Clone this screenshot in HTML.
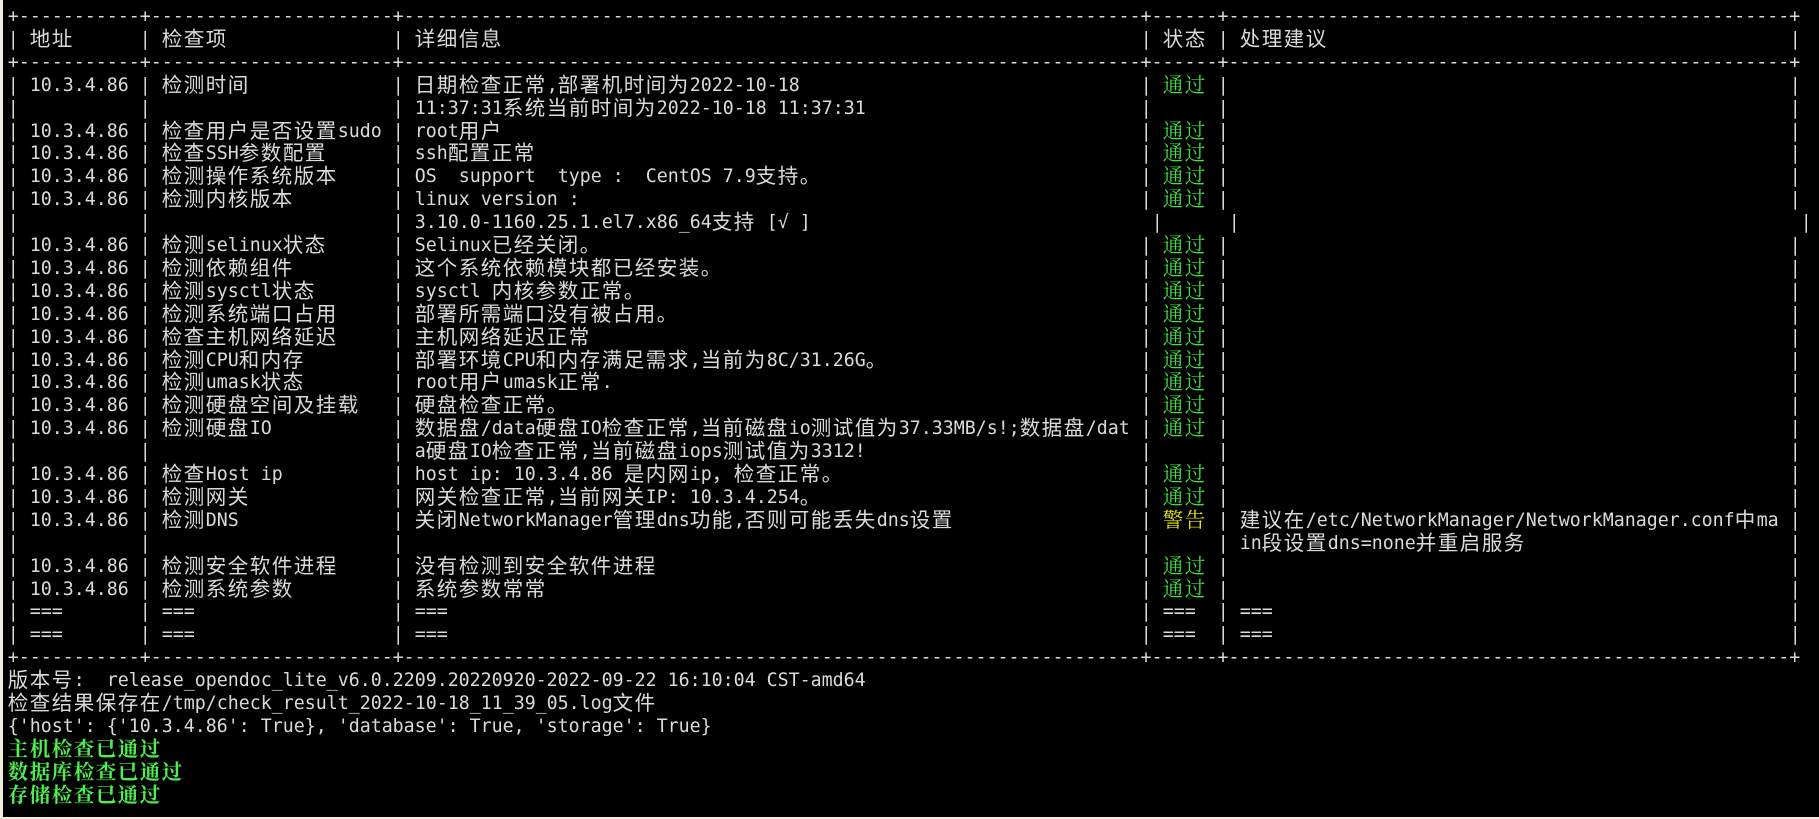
<!DOCTYPE html>
<html><head><meta charset="utf-8"><style>
html,body{margin:0;padding:0;}
body{width:1819px;height:819px;background:#f1ecdc;position:relative;overflow:hidden;}
#t{position:absolute;left:3px;top:0;width:1816px;height:817px;background:#000;}
.r{position:absolute;left:-3px;height:22.9px;width:1819px;}
.r span,.r i{position:absolute;top:0;white-space:pre;font-family:"DejaVu Sans Mono","Liberation Mono",monospace;font-size:18.28px;line-height:22.9px;color:#dadada;font-style:normal;}
u{text-decoration:none;font-family:"Noto Sans CJK SC",sans-serif;font-size:20.5px;letter-spacing:1.5px;line-height:0;vertical-align:baseline;position:relative;top:1px;}
.g{color:#3fe03f!important;}
.g u,.y u,.gb u{font-family:"Noto Serif CJK SC",serif;}
.y{color:#e6e600!important;}
.gb{color:#4cf04c!important;font-weight:bold;}
.p0{left:7.8px}.p1{left:139.8px}.p2{left:392.8px}.p3{left:1140.8px}.p4{left:1217.8px}.p5{left:1789.8px}
.q3{left:1151.8px}.q4{left:1228.8px}.q5{left:1800.8px}
.a{left:29.8px}.b{left:161.8px}.c{left:414.8px}.d{left:1162.8px}.e{left:1239.8px}.f{left:7.8px}
</style></head><body><div id="t">
<div class="r" style="top:6px"><span class="f">+-----------+----------------------+-------------------------------------------------------------------+------+---------------------------------------------------+</span></div>
<div class="r" style="top:28.9px"><i class="p0">|</i><i class="p1">|</i><i class="p2">|</i><i class="p3">|</i><i class="p4">|</i><i class="p5">|</i><span class="a"><u>地址</u></span><span class="b"><u>检查项</u></span><span class="c"><u>详细信息</u></span><span class="d"><u>状态</u></span><span class="e"><u>处理建议</u></span></div>
<div class="r" style="top:51.8px"><span class="f">+-----------+----------------------+-------------------------------------------------------------------+------+---------------------------------------------------+</span></div>
<div class="r" style="top:74.7px"><i class="p0">|</i><i class="p1">|</i><i class="p2">|</i><i class="p3">|</i><i class="p4">|</i><i class="p5">|</i><span class="a">10.3.4.86</span><span class="b"><u>检测时间</u></span><span class="c"><u>日期检查正常</u>,<u>部署机时间为</u>2022-10-18</span><span class="d g"><u>通过</u></span></div>
<div class="r" style="top:97.6px"><i class="p0">|</i><i class="p1">|</i><i class="p2">|</i><i class="p3">|</i><i class="p4">|</i><i class="p5">|</i><span class="c">11:37:31<u>系统当前时间为</u>2022-10-18 11:37:31</span></div>
<div class="r" style="top:120.5px"><i class="p0">|</i><i class="p1">|</i><i class="p2">|</i><i class="p3">|</i><i class="p4">|</i><i class="p5">|</i><span class="a">10.3.4.86</span><span class="b"><u>检查用户是否设置</u>sudo</span><span class="c">root<u>用户</u></span><span class="d g"><u>通过</u></span></div>
<div class="r" style="top:143.4px"><i class="p0">|</i><i class="p1">|</i><i class="p2">|</i><i class="p3">|</i><i class="p4">|</i><i class="p5">|</i><span class="a">10.3.4.86</span><span class="b"><u>检查</u>SSH<u>参数配置</u></span><span class="c">ssh<u>配置正常</u></span><span class="d g"><u>通过</u></span></div>
<div class="r" style="top:166.3px"><i class="p0">|</i><i class="p1">|</i><i class="p2">|</i><i class="p3">|</i><i class="p4">|</i><i class="p5">|</i><span class="a">10.3.4.86</span><span class="b"><u>检测操作系统版本</u></span><span class="c">OS  support  type :  CentOS 7.9<u>支持。</u></span><span class="d g"><u>通过</u></span></div>
<div class="r" style="top:189.2px"><i class="p0">|</i><i class="p1">|</i><i class="p2">|</i><i class="p3">|</i><i class="p4">|</i><i class="p5">|</i><span class="a">10.3.4.86</span><span class="b"><u>检测内核版本</u></span><span class="c">linux version :</span><span class="d g"><u>通过</u></span></div>
<div class="r" style="top:212.1px"><i class="p0">|</i><i class="p1">|</i><i class="p2">|</i><i class="q3">|</i><i class="q4">|</i><i class="q5">|</i><span class="c">3.10.0-1160.25.1.el7.x86_64<u>支持</u> [√ ]</span></div>
<div class="r" style="top:235px"><i class="p0">|</i><i class="p1">|</i><i class="p2">|</i><i class="p3">|</i><i class="p4">|</i><i class="p5">|</i><span class="a">10.3.4.86</span><span class="b"><u>检测</u>selinux<u>状态</u></span><span class="c">Selinux<u>已经关闭。</u></span><span class="d g"><u>通过</u></span></div>
<div class="r" style="top:257.9px"><i class="p0">|</i><i class="p1">|</i><i class="p2">|</i><i class="p3">|</i><i class="p4">|</i><i class="p5">|</i><span class="a">10.3.4.86</span><span class="b"><u>检测依赖组件</u></span><span class="c"><u>这个系统依赖模块都已经安装。</u></span><span class="d g"><u>通过</u></span></div>
<div class="r" style="top:280.8px"><i class="p0">|</i><i class="p1">|</i><i class="p2">|</i><i class="p3">|</i><i class="p4">|</i><i class="p5">|</i><span class="a">10.3.4.86</span><span class="b"><u>检测</u>sysctl<u>状态</u></span><span class="c">sysctl <u>内核参数正常。</u></span><span class="d g"><u>通过</u></span></div>
<div class="r" style="top:303.7px"><i class="p0">|</i><i class="p1">|</i><i class="p2">|</i><i class="p3">|</i><i class="p4">|</i><i class="p5">|</i><span class="a">10.3.4.86</span><span class="b"><u>检测系统端口占用</u></span><span class="c"><u>部署所需端口没有被占用。</u></span><span class="d g"><u>通过</u></span></div>
<div class="r" style="top:326.6px"><i class="p0">|</i><i class="p1">|</i><i class="p2">|</i><i class="p3">|</i><i class="p4">|</i><i class="p5">|</i><span class="a">10.3.4.86</span><span class="b"><u>检查主机网络延迟</u></span><span class="c"><u>主机网络延迟正常</u></span><span class="d g"><u>通过</u></span></div>
<div class="r" style="top:349.5px"><i class="p0">|</i><i class="p1">|</i><i class="p2">|</i><i class="p3">|</i><i class="p4">|</i><i class="p5">|</i><span class="a">10.3.4.86</span><span class="b"><u>检测</u>CPU<u>和内存</u></span><span class="c"><u>部署环境</u>CPU<u>和内存满足需求</u>,<u>当前为</u>8C/31.26G<u>。</u></span><span class="d g"><u>通过</u></span></div>
<div class="r" style="top:372.4px"><i class="p0">|</i><i class="p1">|</i><i class="p2">|</i><i class="p3">|</i><i class="p4">|</i><i class="p5">|</i><span class="a">10.3.4.86</span><span class="b"><u>检测</u>umask<u>状态</u></span><span class="c">root<u>用户</u>umask<u>正常</u>.</span><span class="d g"><u>通过</u></span></div>
<div class="r" style="top:395.3px"><i class="p0">|</i><i class="p1">|</i><i class="p2">|</i><i class="p3">|</i><i class="p4">|</i><i class="p5">|</i><span class="a">10.3.4.86</span><span class="b"><u>检测硬盘空间及挂载</u></span><span class="c"><u>硬盘检查正常。</u></span><span class="d g"><u>通过</u></span></div>
<div class="r" style="top:418.2px"><i class="p0">|</i><i class="p1">|</i><i class="p2">|</i><i class="p3">|</i><i class="p4">|</i><i class="p5">|</i><span class="a">10.3.4.86</span><span class="b"><u>检测硬盘</u>IO</span><span class="c"><u>数据盘</u>/data<u>硬盘</u>IO<u>检查正常</u>,<u>当前磁盘</u>io<u>测试值为</u>37.33MB/s!;<u>数据盘</u>/dat</span><span class="d g"><u>通过</u></span></div>
<div class="r" style="top:441.1px"><i class="p0">|</i><i class="p1">|</i><i class="p2">|</i><i class="p3">|</i><i class="p4">|</i><i class="p5">|</i><span class="c">a<u>硬盘</u>IO<u>检查正常</u>,<u>当前磁盘</u>iops<u>测试值为</u>3312!</span></div>
<div class="r" style="top:464px"><i class="p0">|</i><i class="p1">|</i><i class="p2">|</i><i class="p3">|</i><i class="p4">|</i><i class="p5">|</i><span class="a">10.3.4.86</span><span class="b"><u>检查</u>Host ip</span><span class="c">host ip: 10.3.4.86 <u>是内网</u>ip<u>，检查正常。</u></span><span class="d g"><u>通过</u></span></div>
<div class="r" style="top:486.9px"><i class="p0">|</i><i class="p1">|</i><i class="p2">|</i><i class="p3">|</i><i class="p4">|</i><i class="p5">|</i><span class="a">10.3.4.86</span><span class="b"><u>检测网关</u></span><span class="c"><u>网关检查正常</u>,<u>当前网关</u>IP: 10.3.4.254<u>。</u></span><span class="d g"><u>通过</u></span></div>
<div class="r" style="top:509.8px"><i class="p0">|</i><i class="p1">|</i><i class="p2">|</i><i class="p3">|</i><i class="p4">|</i><i class="p5">|</i><span class="a">10.3.4.86</span><span class="b"><u>检测</u>DNS</span><span class="c"><u>关闭</u>NetworkManager<u>管理</u>dns<u>功能</u>,<u>否则可能丢失</u>dns<u>设置</u></span><span class="d y"><u>警告</u></span><span class="e"><u>建议在</u>/etc/NetworkManager/NetworkManager.conf<u>中</u>ma</span></div>
<div class="r" style="top:532.7px"><i class="p0">|</i><i class="p1">|</i><i class="p2">|</i><i class="p3">|</i><i class="p4">|</i><i class="p5">|</i><span class="e">in<u>段设置</u>dns=none<u>并重启服务</u></span></div>
<div class="r" style="top:555.6px"><i class="p0">|</i><i class="p1">|</i><i class="p2">|</i><i class="p3">|</i><i class="p4">|</i><i class="p5">|</i><span class="a">10.3.4.86</span><span class="b"><u>检测安全软件进程</u></span><span class="c"><u>没有检测到安全软件进程</u></span><span class="d g"><u>通过</u></span></div>
<div class="r" style="top:578.5px"><i class="p0">|</i><i class="p1">|</i><i class="p2">|</i><i class="p3">|</i><i class="p4">|</i><i class="p5">|</i><span class="a">10.3.4.86</span><span class="b"><u>检测系统参数</u></span><span class="c"><u>系统参数常常</u></span><span class="d g"><u>通过</u></span></div>
<div class="r" style="top:601.4px"><i class="p0">|</i><i class="p1">|</i><i class="p2">|</i><i class="p3">|</i><i class="p4">|</i><i class="p5">|</i><span class="a">===</span><span class="b">===</span><span class="c">===</span><span class="d">===</span><span class="e">===</span></div>
<div class="r" style="top:624.3px"><i class="p0">|</i><i class="p1">|</i><i class="p2">|</i><i class="p3">|</i><i class="p4">|</i><i class="p5">|</i><span class="a">===</span><span class="b">===</span><span class="c">===</span><span class="d">===</span><span class="e">===</span></div>
<div class="r" style="top:647.2px"><span class="f">+-----------+----------------------+-------------------------------------------------------------------+------+---------------------------------------------------+</span></div>
<div class="r" style="top:670.1px"><span class="f"><u>版本号</u>:  release_opendoc_lite_v6.0.2209.20220920-2022-09-22 16:10:04 CST-amd64</span></div>
<div class="r" style="top:693px"><span class="f"><u>检查结果保存在</u>/tmp/check_result_2022-10-18_11_39_05.log<u>文件</u></span></div>
<div class="r" style="top:715.9px"><span class="f">{'host': {'10.3.4.86': True}, 'database': True, 'storage': True}</span></div>
<div class="r" style="top:738.8px"><span class="f gb"><u>主机检查已通过</u></span></div>
<div class="r" style="top:761.7px"><span class="f gb"><u>数据库检查已通过</u></span></div>
<div class="r" style="top:784.6px"><span class="f gb"><u>存储检查已通过</u></span></div>
</div></body></html>
